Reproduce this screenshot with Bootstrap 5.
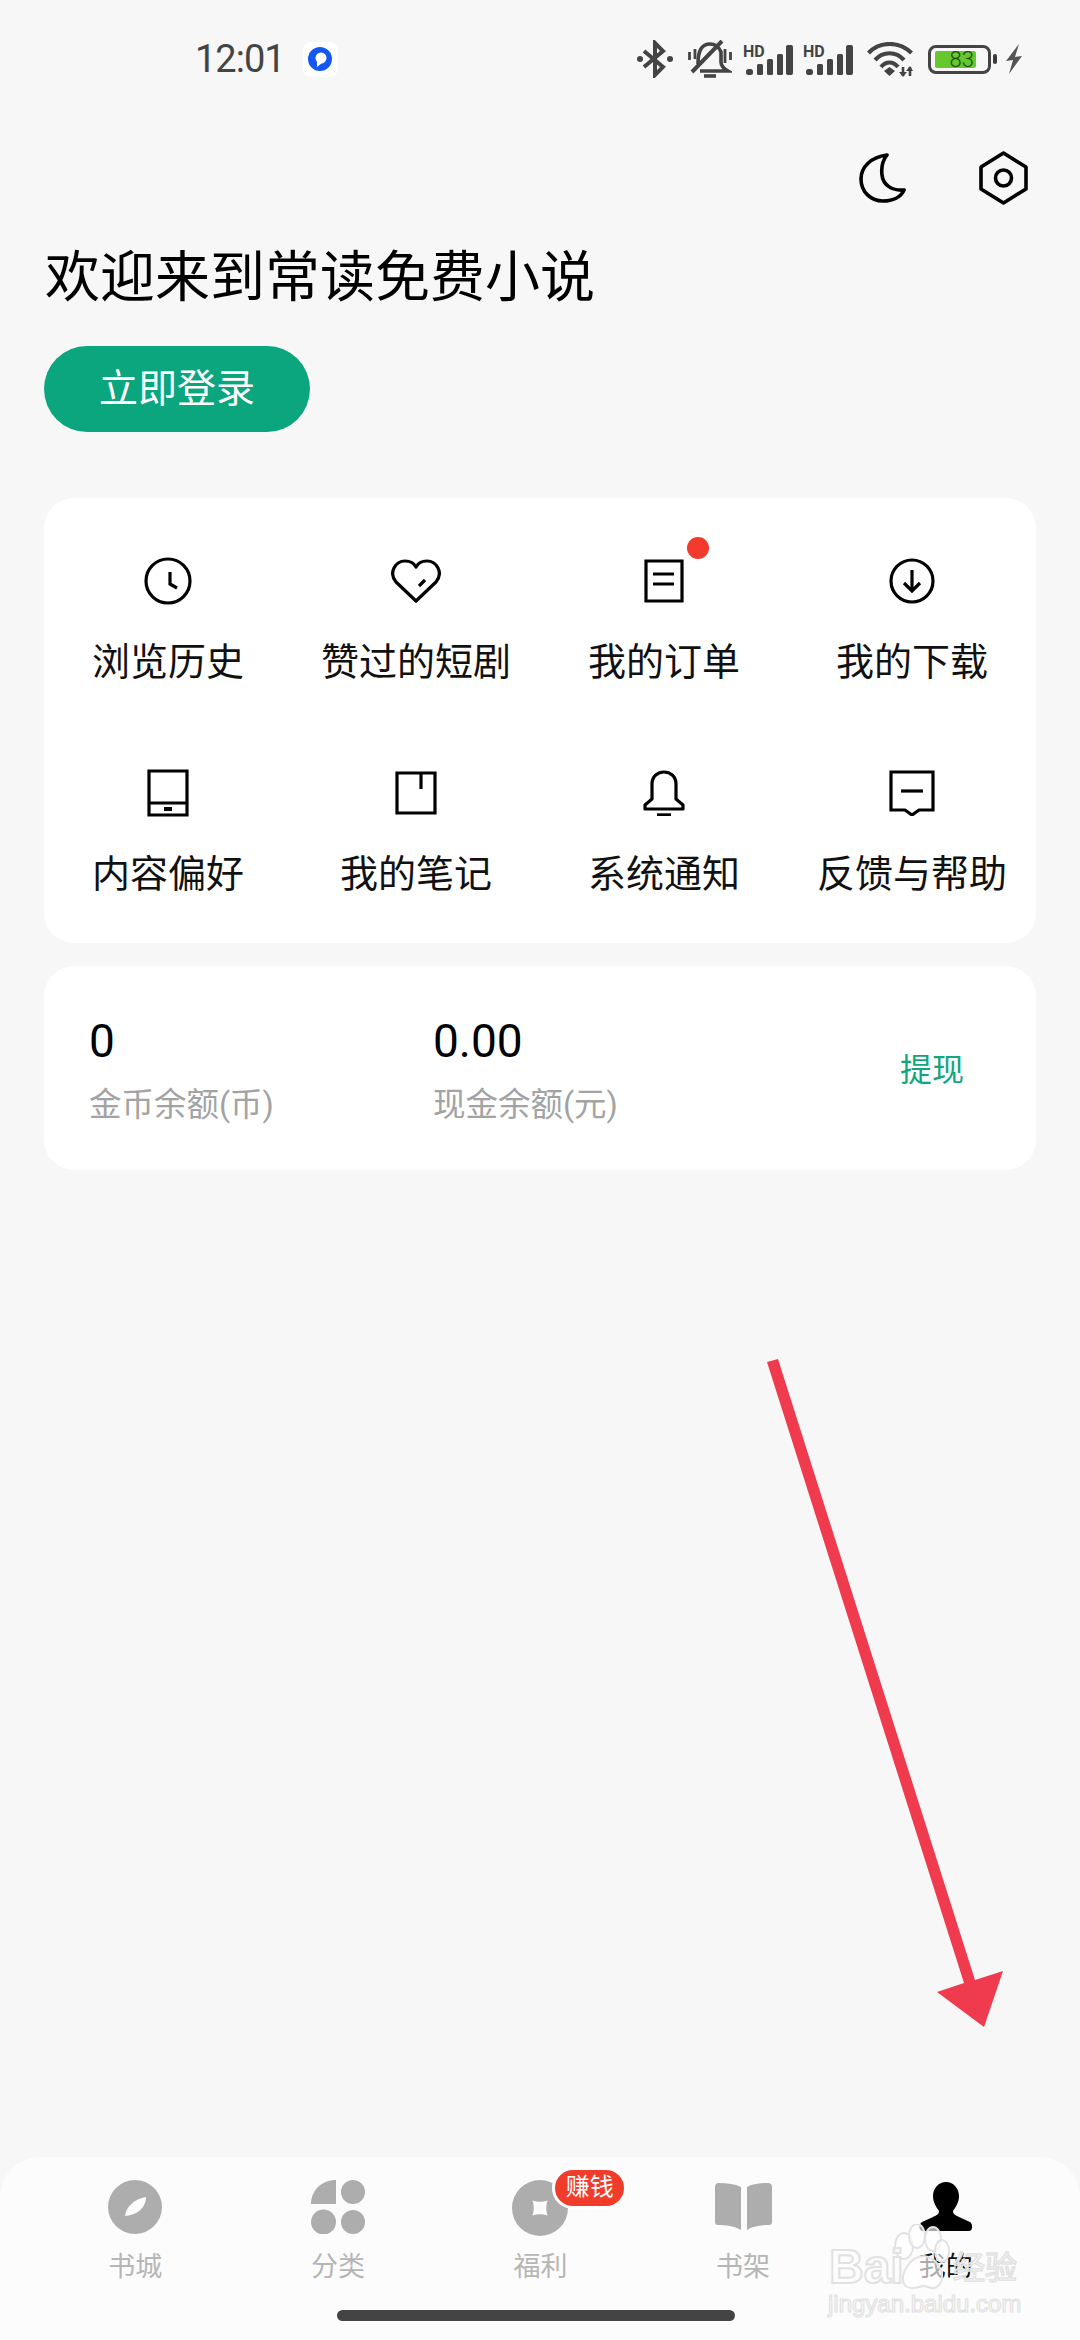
<!DOCTYPE html>
<html lang="zh-CN">
<head>
  <meta charset="UTF-8" />
  <title>我的</title>
  <link href="https://cdn.jsdelivr.net/npm/bootstrap@5.3.0/dist/css/bootstrap.min.css" rel="stylesheet" />
  <style>
    html, body { margin: 0; }
    body {
      width: 1080px; height: 2340px; overflow: hidden; position: relative;
      background: #f7f7f7; color: #000;
      font-family: Roboto, "Noto Sans CJK SC", sans-serif;
    }
    .status-row { height: 118px; padding: 0 58px 0 195px; color: #444; }
    .clock-text { font-size: 38px; font-weight: 400; line-height: 1; letter-spacing: -1px; }
    .app-dot { width: 35px; height: 35px; margin-left: 18px; background: #fff; border-radius: 8px; }
    .sb-8 { margin-left: 8px; }
    .sb-14 { margin-left: 14px; }
    .sb-15 { margin-left: 15px; }
    .sig-ic { margin-left: 11px; margin-top: -8px; }
    .sig-ic + .sig-ic { margin-left: 10px; }
    .batt { width: 63px; height: 29px; border: 3px solid #444; border-radius: 8px; padding: 3px 4px; }
    .batt-fill {
      width: 41px; height: 17px; background: #66c72f; color: #1c4a10; border-radius: 2px;
      font-size: 22px; line-height: 17px; font-weight: 300; text-align: right; padding-right: 2px;
    }
    .batt-nub { width: 4px; height: 10px; background: #3a3a3a; border-radius: 2px; margin-left: 2px; }
    .top-tools { height: 120px; padding-right: 52px; gap: 73px; }
    .page-pad { padding: 0 44px; }
    .welcome { font-size: 55px; line-height: 78px; font-weight: 400; margin: 0; padding-left: 1px; }
    .login-btn {
      width: 266px; height: 86px; margin-top: 30px; padding: 0; border: 0;
      background: #0ba67d; color: #fff; font-size: 39px; line-height: 86px;
    }
    .login-btn:hover { background: #0ba67d; color: #fff; }
    .panel { border: 0; border-radius: 30px; background: #fff; }
    .menu-panel { margin-top: 66px; height: 445px; padding: 58px 0 44px; }
    .menu-cell { height: 131px; }
    .menu-cell:nth-child(n+5) { margin-top: 81px; }
    .menu-ic { height: 50px; position: relative; }
    .menu-lbl { font-size: 38px; line-height: 50px; margin-top: 31px; color: #111; white-space: nowrap; }
    .red-dot { position: absolute; width: 22px; height: 22px; border-radius: 50%; background: #f4392d; left: 147px; top: -19px; }
    .money-panel { margin-top: 23px; height: 204px; padding: 0 72px 0 45px; }
    .money-col { width: 344px; }
    .money-num { font-size: 46px; line-height: 54px; margin-top: 48px; }
    .money-sub { font-size: 32.5px; line-height: 44px; margin-top: 15px; color: #a3a3a3; white-space: nowrap; }
    .cash-link { font-size: 32px; line-height: 44px; margin-top: 3px; color: #13a67c; text-decoration: none; }
    .tabbar {
      position: absolute; left: 0; right: 0; bottom: 0; height: 183px; padding: 23px 33px 0 34px;
      background: #fcfcfc; border-radius: 40px 40px 0 0;
    }
    .tab-item { flex: 1 1 0; position: relative; }
    .tab-ic { height: 56px; }
    .tab-lbl { font-size: 27px; line-height: 40px; margin-top: 11px; color: #b6b6b6; }
    .tab-item.on .tab-lbl { color: #111; }
    .earn-tag {
      position: absolute; left: 113px; top: -13px; width: 75px; height: 42px; line-height: 35px;
      background: #f23c2b; color: #fff; font-size: 24px; text-align: center;
      border: 3px solid #fff; border-radius: 21px;
    }
    .home-bar { position: absolute; left: 337px; bottom: 19px; width: 398px; height: 11px; border-radius: 6px; background: #444; }
    .red-arrow { position: absolute; left: 760px; top: 1350px; }
    .wm { position: absolute; left: 828px; top: 2224px; width: 195px; height: 95px; pointer-events: none; }
    .wm-name {
      position: absolute; font-family: "Liberation Sans", sans-serif; font-weight: 700; font-size: 48px; line-height: 48px;
      left: 1px; top: 19px; color: rgba(255,255,255,.6); -webkit-text-stroke: 2px #e2e2e2;
    }
    .wm-cn {
      position: absolute; left: 125px; top: 27px; font-size: 32px; line-height: 34px;
      color: rgba(255,255,255,.6); -webkit-text-stroke: 1.5px #e2e2e2;
    }
    .wm-url {
      position: absolute; left: 0; top: 66px; font-size: 24px; line-height: 28px;
      color: rgba(255,255,255,.7); -webkit-text-stroke: 1.2px #e2e2e2; font-family: "Liberation Sans", sans-serif;
    }
    .wm-paw { position: absolute; left: 60px; top: 0; }
  </style>
</head>
<body>

  <div class="status-row d-flex align-items-center">
    <span class="clock-text">12:01</span>
    <div class="app-dot d-flex align-items-center justify-content-center">
      <svg width="26" height="26" viewBox="0 0 26 26"><circle cx="13" cy="13" r="12" fill="#1558f0"/><circle cx="14" cy="12" r="5.5" fill="#fff"/><path d="M10 14 L15 17 L10 21Z" fill="#fff"/></svg>
    </div>
    <div class="d-flex align-items-center ms-auto">
      <svg width="36" height="38" viewBox="0 0 36 38" fill="none" stroke="#444" stroke-width="4"><path d="M7 11 L26 27 L18 35 V3 L26 11 L7 27"/><circle cx="3" cy="19" r="3" fill="#444" stroke="none"/><circle cx="33" cy="19" r="3" fill="#444" stroke="none"/></svg>
      <svg class="sb-15" width="44" height="38" viewBox="0 0 44 38" fill="none" stroke="#444" stroke-width="3.6"><path d="M10 24 C10 10 14 4 22 4 C27 4 31 7 33 12 L33 22 Q33 27 40 31 H12"/><path d="M4 32 L34 1" stroke-width="4"/><path d="M16 36 H28" stroke-width="3.6"/><path d="M1.5 12 V20 M7 9 V19 M37 9 V23 M42.5 12 V20" stroke-width="2.8"/></svg>
      <svg class="sig-ic" width="50" height="39" viewBox="0 -8 50 39" fill="#444"><text x="0" y="12.5" font-family="Roboto, sans-serif" font-weight="700" font-size="16" fill="#444">HD</text><rect x="3" y="25" width="7" height="6" rx="2.5"/><rect x="14" y="20" width="6" height="11" rx="1.5"/><rect x="24" y="15" width="6" height="16" rx="1.5"/><rect x="34" y="10" width="6" height="21" rx="1.5"/><rect x="43" y="1" width="7" height="30" rx="2"/></svg>
      <svg class="sig-ic" width="50" height="39" viewBox="0 -8 50 39" fill="#444"><text x="0" y="12.5" font-family="Roboto, sans-serif" font-weight="700" font-size="16" fill="#444">HD</text><rect x="3" y="25" width="7" height="6" rx="2.5"/><rect x="14" y="20" width="6" height="11" rx="1.5"/><rect x="24" y="15" width="6" height="16" rx="1.5"/><rect x="34" y="10" width="6" height="21" rx="1.5"/><rect x="43" y="1" width="7" height="30" rx="2"/></svg>
      <svg class="sb-14" width="46" height="35" viewBox="0 0 46 35" fill="none" stroke="#444" stroke-width="4.2"><path d="M1.5 11 C13 -1 32 -1 44.5 11"/><path d="M8 18 C16 9 29 9 37 18"/><path d="M14 25 C19 19 26 19 31 25"/><path d="M22.5 34 L17 29 L22.5 25 L28 29Z" fill="#444" stroke="none"/><path d="M36 25 V34 M43 25 V34" stroke-width="2.6"/><path d="M32 30 L36 35 L40 30Z M39 29 L43 24 L46 29Z" fill="#444" stroke="none"/></svg>
      <div class="batt sb-15"><div class="batt-fill">83</div></div>
      <div class="batt-nub"></div>
      <svg class="sb-8" width="17" height="30" viewBox="0 0 17 30" fill="#555"><path d="M14 0 L1 17 L8 16 L4 30 L17 12 L10 13Z"/></svg>
    </div>
  </div>

  <div class="top-tools d-flex align-items-center justify-content-end">
    <svg width="47" height="50" viewBox="0 0 47 50" fill="none" stroke="#000" stroke-width="3.6" stroke-linejoin="round"><path d="M28 2 C12 4 2 14 2 26 C2 39 12 48 24 48 C34 48 42 44 45 37 C33 38 24 32 23 22 C22 14 24 7 28 2Z"/></svg>
    <svg width="49" height="54" viewBox="0 0 49 54" fill="none" stroke="#000" stroke-width="3.6" stroke-linejoin="round"><path d="M24.5 2 L47 16 V38 L24.5 52 L2 38 V16Z"/><circle cx="24.5" cy="27" r="8"/></svg>
  </div>

  <div class="page-pad">
    <h1 class="welcome">欢迎来到常读免费小说</h1>
    <button type="button" class="btn login-btn rounded-pill d-block">立即登录</button>

    <div class="card panel menu-panel">
      <div class="row row-cols-4 g-0 text-center">
        <div class="col menu-cell">
          <div class="menu-ic d-flex align-items-center justify-content-center">
            <svg width="48" height="48" viewBox="0 0 48 48" fill="none" stroke="#000" stroke-width="3.2"><circle cx="24" cy="24" r="22"/><path d="M26 15 V27 L33 31"/></svg>
          </div>
          <div class="menu-lbl">浏览历史</div>
        </div>
        <div class="col menu-cell">
          <div class="menu-ic d-flex align-items-center justify-content-center">
            <svg width="50" height="44" viewBox="0 0 50 44" fill="none" stroke="#000" stroke-width="3.2" stroke-linejoin="round"><path d="M25 42 L5 23 C-3 13 5 2 14 2 C19 2 23 4 25 8 C27 4 31 2 36 2 C45 2 53 13 45 23Z"/><path d="M28 27 L34 21"/></svg>
          </div>
          <div class="menu-lbl">赞过的短剧</div>
        </div>
        <div class="col menu-cell">
          <div class="menu-ic d-flex align-items-center justify-content-center">
            <svg width="40" height="44" viewBox="0 0 40 44" fill="none" stroke="#000" stroke-width="3.2"><path d="M2 2 H38 V42 H2Z"/><path d="M9 15 H30 M9 25 H30"/></svg>
            <span class="red-dot"></span>
          </div>
          <div class="menu-lbl">我的订单</div>
        </div>
        <div class="col menu-cell">
          <div class="menu-ic d-flex align-items-center justify-content-center">
            <svg width="46" height="46" viewBox="0 0 46 46" fill="none" stroke="#000" stroke-width="3.2"><circle cx="23" cy="23" r="21"/><path d="M23 12 V32 M15 25 L23 33 L31 25"/></svg>
          </div>
          <div class="menu-lbl">我的下载</div>
        </div>
        <div class="col menu-cell">
          <div class="menu-ic d-flex align-items-center justify-content-center">
            <svg width="42" height="48" viewBox="0 0 42 48" fill="none" stroke="#000" stroke-width="3.2"><path d="M2 2 H40 V46 H2Z"/><path d="M2 34 H40"/><path d="M17 40 H25" stroke-width="4"/></svg>
          </div>
          <div class="menu-lbl">内容偏好</div>
        </div>
        <div class="col menu-cell">
          <div class="menu-ic d-flex align-items-center justify-content-center">
            <svg width="42" height="44" viewBox="0 0 42 44" fill="none" stroke="#000" stroke-width="3.2"><path d="M2 2 H40 V42 H2Z"/><path d="M26 2 V18"/></svg>
          </div>
          <div class="menu-lbl">我的笔记</div>
        </div>
        <div class="col menu-cell">
          <div class="menu-ic d-flex align-items-center justify-content-center">
            <svg width="42" height="46" viewBox="0 0 42 46" fill="none" stroke="#000" stroke-width="3.2" stroke-linejoin="round"><path d="M9 29 V14 C9 -2 33 -2 33 14 V29 L40 35 V39 H2 V35Z"/><path d="M14 45 H28" stroke-width="3.4"/></svg>
          </div>
          <div class="menu-lbl">系统通知</div>
        </div>
        <div class="col menu-cell">
          <div class="menu-ic d-flex align-items-center justify-content-center">
            <svg width="46" height="46" viewBox="0 0 46 46" fill="none" stroke="#000" stroke-width="3.2"><path d="M2 2 H44 V40 H30 L23 45 L16 40 H2Z"/><path d="M12 21 H34"/></svg>
          </div>
          <div class="menu-lbl">反馈与帮助</div>
        </div>
      </div>
    </div>

    <div class="card panel money-panel flex-row align-items-start">
      <div class="money-col">
        <div class="money-num">0</div>
        <div class="money-sub">金币余额(币)</div>
      </div>
      <div class="money-col">
        <div class="money-num">0.00</div>
        <div class="money-sub">现金余额(元)</div>
      </div>
      <a class="cash-link ms-auto align-self-center" href="#">提现</a>
    </div>
  </div>

  <div class="tabbar d-flex text-center">
    <div class="tab-item">
      <div class="tab-ic">
        <svg width="54" height="54" viewBox="0 0 54 54"><circle cx="27" cy="27" r="27" fill="#adadad"/><path d="M38 17 C38 27 30 35 17 36 C18 27 26 19 38 17Z" fill="#fcfcfc"/></svg>
      </div>
      <div class="tab-lbl">书城</div>
    </div>
    <div class="tab-item">
      <div class="tab-ic">
        <svg width="54" height="54" viewBox="0 0 54 54" fill="#adadad"><path d="M25 0 V24 H0 C0 10 11 0 25 0Z"/><circle cx="42" cy="12" r="12"/><circle cx="12.5" cy="42" r="12.5"/><circle cx="42" cy="42" r="12"/></svg>
      </div>
      <div class="tab-lbl">分类</div>
    </div>
    <div class="tab-item">
      <div class="tab-ic">
        <svg width="56" height="56" viewBox="0 0 56 56"><circle cx="28" cy="28" r="28" fill="#adadad"/><path d="M20.5 20.5 Q28 23 35.5 20.5 Q33 28 35.5 35.5 Q28 33 20.5 35.5 Q23 28 20.5 20.5Z" fill="#fcfcfc"/></svg>
      </div>
      <div class="tab-lbl">福利</div>
      <span class="earn-tag">赚钱</span>
    </div>
    <div class="tab-item">
      <div class="tab-ic">
        <svg width="57" height="52" viewBox="0 0 57 52" fill="#adadad"><path d="M4 3 C12 3 20 4 26 7 V50 C20 46 10 45 3 45 Q0 45 0 42 V7 Q0 3 4 3Z"/><path d="M53 3 C45 3 37 4 32 7 V50 C37 46 47 45 54 45 Q57 45 57 42 V7 Q57 3 53 3Z"/></svg>
      </div>
      <div class="tab-lbl">书架</div>
    </div>
    <div class="tab-item on">
      <div class="tab-ic">
        <svg width="57" height="52" viewBox="0 0 57 52"><path d="M29 2 C37 2 42 9 42 16 C42 23 38 28 36 31 C36 34 38 35 42 37 L53 42 C56 44 56 51 52 51 H6 C2 51 1 45 5 42 L16 37 C20 35 22 34 22 31 C20 28 16 23 16 16 C16 9 21 2 29 2Z" fill="#000"/></svg>
      </div>
      <div class="tab-lbl">我的</div>
    </div>
  </div>
  <div class="home-bar"></div>

  <div class="wm">
    <svg class="wm-paw" width="66" height="72" viewBox="0 0 66 72" fill="rgba(255,255,255,.65)" stroke="#e2e2e2" stroke-width="2"><ellipse cx="16" cy="22" rx="9" ry="13"/><ellipse cx="29" cy="12" rx="8" ry="12"/><ellipse cx="45" cy="15" rx="8" ry="12"/><ellipse cx="54" cy="27" rx="7" ry="11"/><path d="M36 32 C50 34 58 50 52 60 C46 68 40 62 36 62 C32 62 22 68 16 60 C12 50 22 32 36 32Z"/></svg>
    <span class="wm-name">Bai</span>
    <span class="wm-cn">经验</span>
    <span class="wm-url">jingyan.baidu.com</span>
  </div>

  <svg class="red-arrow" width="250" height="690" viewBox="760 1350 250 690" fill="#ef3b4d"><path d="M767 1362 L778 1359 L975 1980 L1003 1971 L984 2027 L937 1992 L964 1983Z"/></svg>

  <script src="https://cdn.jsdelivr.net/npm/bootstrap@5.3.0/dist/js/bootstrap.bundle.min.js"></script>
</body>
</html>
